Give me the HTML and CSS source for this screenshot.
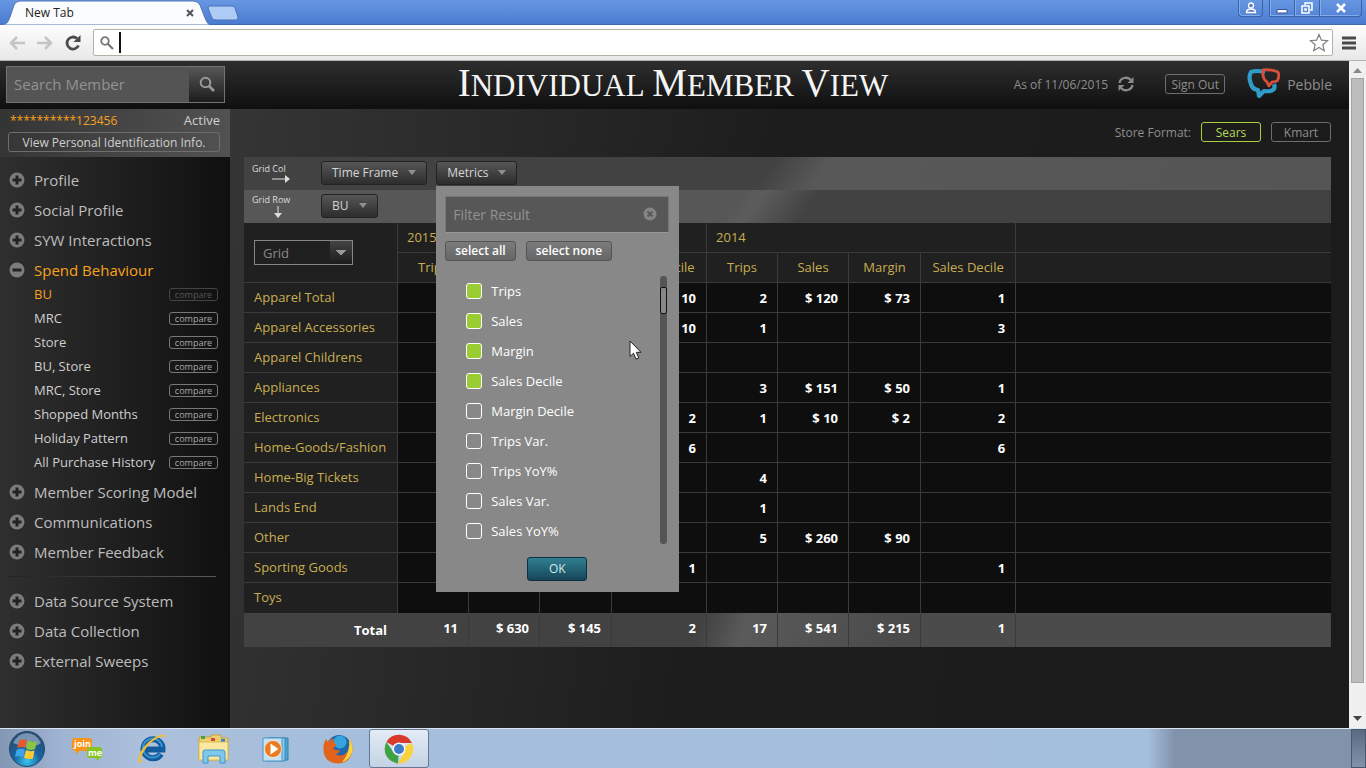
FILE: index.html
```html
<!DOCTYPE html>
<html lang="en">
<head>
  <meta charset="UTF-8">
  <meta name="viewport" content="width=device-width, initial-scale=1.0">
  <title>Individual Member View</title>
  <link rel="stylesheet" href="styles.css">
</head>
<body>

  <!-- icons used more than once -->
  <svg class="sprite" aria-hidden="true">
    <symbol id="plus" viewBox="0 0 16 16">
      <circle cx="8" cy="8" r="7.5" fill="#7c7c7c"/>
      <path d="M8 3.5v9M3.5 8h9" stroke="#222" stroke-width="3"/>
    </symbol>
    <symbol id="minus" viewBox="0 0 16 16">
      <circle cx="8" cy="8" r="7.5" fill="#7c7c7c"/>
      <path d="M3.5 8h9" stroke="#222" stroke-width="3"/>
    </symbol>
  </svg>

  <!-- Browser window -->
  <div class="tabstrip">
    <div class="tab">
      <svg class="tab-shape" viewBox="0 0 210 25" preserveAspectRatio="none" aria-hidden="true">
        <path d="M0 25C7 25 8 22 10 17L14 5Q16 1 20 1H193Q198 1 200 5L205 18Q208 25 210 25Z" fill="#fbfcfe" stroke="#5475b5" stroke-width="1"/>
      </svg>
      <span class="tab-title">New Tab</span>
      <button class="tab-close" aria-label="Close tab">
        <svg width="8" height="8" viewBox="0 0 8 8"><path d="M1 1l6 6M7 1L1 7" stroke="#555" stroke-width="2"/></svg>
      </button>
    </div>
    <button class="tab-new" aria-label="New tab">
      <svg width="32" height="16" viewBox="0 0 32 16"><path d="M3 1H25Q27 1 28 3L31 12Q31 15 29 15H9Q6 15 5 13L1 3Q1 1 3 1Z" fill="#aecbf3" stroke="#4a72bd"/></svg>
    </button>
    <div class="window-buttons">
      <button class="win user" aria-label="User">
        <svg width="12" height="12" viewBox="0 0 12 12"><circle cx="6" cy="3.500" r="2.500" fill="#5d7fc0" stroke="#fff" stroke-width="1.300"/><path d="M1.500 10.500Q1.500 7 6 7T10.500 10.500Z" fill="#5d7fc0" stroke="#fff" stroke-width="1.300"/></svg>
      </button>
      <button class="win" aria-label="Minimize">
        <svg width="12" height="12" viewBox="0 0 12 12"><path d="M1 7.500h10v3.500H1z" fill="#fff" stroke="#345697"/></svg>
      </button>
      <button class="win" aria-label="Restore">
        <svg width="12" height="12" viewBox="0 0 12 12"><path d="M4 3V1h7v7H9M1 4h7v7H1zM4 7h1v1H4z" fill="none" stroke="#fff" stroke-width="1.500"/></svg>
      </button>
      <button class="win close" aria-label="Close window">
        <svg width="12" height="10" viewBox="0 0 12 10"><path d="M2 1l8 8M10 1L2 9" stroke="#fff" stroke-width="2.500"/></svg>
      </button>
    </div>
  </div>

  <div class="toolbar">
    <button class="nav" aria-label="Back">
      <svg width="16" height="14" viewBox="0 0 16 14"><path d="M8 1L2 7l6 6M2 7h14" fill="none" stroke="#c4c4c4" stroke-width="2.500"/></svg>
    </button>
    <button class="nav" aria-label="Forward">
      <svg width="16" height="14" viewBox="0 0 16 14"><path d="M8 1l6 6-6 6M14 7H0" fill="none" stroke="#c4c4c4" stroke-width="2.500"/></svg>
    </button>
    <button class="nav" aria-label="Reload">
      <svg width="16" height="16" viewBox="0 0 16 16"><path d="M13.500 10.500A6 6 0 1 1 12 3.500" fill="none" stroke="#4a4a4a" stroke-width="2.800"/><path d="M15.500 0v7h-7z" fill="#4a4a4a"/></svg>
    </button>
    <div class="omnibox">
      <svg width="14" height="14" viewBox="0 0 14 14" aria-hidden="true"><circle cx="5" cy="5" r="3.800" fill="none" stroke="#777" stroke-width="1.800"/><path d="M8 8l5 5" stroke="#777" stroke-width="2.200"/></svg>
      <span class="caret"></span>
      <input type="text" class="url" aria-label="Address">
      <svg width="20" height="19" viewBox="0 0 20 19" aria-hidden="true"><path d="M10 1.500l2.400 5.700 6.100.5-4.700 4 1.500 6-5.300-3.200-5.300 3.200 1.500-6-4.700-4 6.100-.5z" fill="#fff" stroke="#808080" stroke-width="1.200"/></svg>
    </div>
    <button class="nav" aria-label="Menu">
      <svg width="14" height="14" viewBox="0 0 14 14"><path d="M0 2h14M0 7h14M0 12h14" stroke="#4a4a4a" stroke-width="3"/></svg>
    </button>
  </div>

  <!-- Page -->
  <div class="viewport">
    <div class="app">
      <header class="header">
        <form class="search">
          <input type="text" placeholder="Search Member" aria-label="Search Member">
          <button type="button" aria-label="Search">
            <svg width="16" height="16" viewBox="0 0 16 16"><circle cx="6.500" cy="6.500" r="4.800" fill="none" stroke="#999" stroke-width="2"/><path d="M10 10l5 5" stroke="#999" stroke-width="2.600"/></svg>
          </button>
        </form>
        <h1><span>Individual</span> <span>Member</span> <span>View</span></h1>
        <div class="session">
          <span class="as-of">As of 11/06/2015</span>
          <button class="refresh" aria-label="Refresh">
            <svg width="16" height="16" viewBox="0 0 16 16"><path d="M1.500 7A6.500 6 0 0 1 13 4M14.500 9A6.500 6 0 0 1 3 12" fill="none" stroke="#8a8a8a" stroke-width="2.300"/><path d="M15.500 1v6h-6zM.5 15V9h6z" fill="#8a8a8a"/></svg>
          </button>
          <button class="outline sign-out">Sign Out</button>
          <svg class="logo" width="33" height="32" viewBox="0 0 33 32" aria-hidden="true">
            <path d="M18 4Q9 2 4 4Q1 9 4 16Q5 21 11 22L12 28L17 23Q24 24 27 21Q28 19 27 16" fill="none" stroke="#2f9cc9" stroke-width="4.200" stroke-linejoin="round"/>
            <path d="M16 2Q24 1 31 4Q33 9 30 13Q27 14 25 14L22 18L20 14Q15 11 16 2Z" fill="none" stroke="#d9503a" stroke-width="2.800" stroke-linejoin="round"/>
          </svg>
          <span class="brand">Pebble</span>
        </div>
      </header>

      <div class="body">
        <aside class="sidebar">
          <div class="member">
            <div class="member-row">
              <span class="member-id">**********123456</span>
              <span>Active</span>
            </div>
            <button class="outline">View Personal Identification Info.</button>
          </div>
          <nav>
            <ul class="menu">
              <li><a href="#"><svg><use href="#plus"/></svg>Profile</a></li>
              <li><a href="#"><svg><use href="#plus"/></svg>Social Profile</a></li>
              <li><a href="#"><svg><use href="#plus"/></svg>SYW Interactions</a></li>
              <li>
                <a href="#" class="active"><svg><use href="#minus"/></svg>Spend Behaviour</a>
                <ul class="submenu">
                  <li><a href="#" class="active">BU</a><button disabled>compare</button></li>
                  <li><a href="#">MRC</a><button>compare</button></li>
                  <li><a href="#">Store</a><button>compare</button></li>
                  <li><a href="#">BU, Store</a><button>compare</button></li>
                  <li><a href="#">MRC, Store</a><button>compare</button></li>
                  <li><a href="#">Shopped Months</a><button>compare</button></li>
                  <li><a href="#">Holiday Pattern</a><button>compare</button></li>
                  <li><a href="#">All Purchase History</a><button>compare</button></li>
                </ul>
              </li>
              <li><a href="#"><svg><use href="#plus"/></svg>Member Scoring Model</a></li>
              <li><a href="#"><svg><use href="#plus"/></svg>Communications</a></li>
              <li><a href="#"><svg><use href="#plus"/></svg>Member Feedback</a></li>
            </ul>
            <hr>
            <ul class="menu">
              <li><a href="#"><svg><use href="#plus"/></svg>Data Source System</a></li>
              <li><a href="#"><svg><use href="#plus"/></svg>Data Collection</a></li>
              <li><a href="#"><svg><use href="#plus"/></svg>External Sweeps</a></li>
            </ul>
          </nav>
        </aside>

        <main class="main">
          <div class="store-format">
            <span>Store Format:</span>
            <button class="outline selected">Sears</button>
            <button class="outline">Kmart</button>
          </div>

          <div class="panel">
            <div class="bar bar-col">
              <div class="axis">
                <span>Grid Col</span>
                <svg class="arrow-right" width="20" height="8" viewBox="0 0 20 8" aria-hidden="true"><path d="M1 4h15" stroke="#ddd"/><path d="M14 0l5 4-5 4z" fill="#ddd"/></svg>
              </div>
              <button class="drop">Time Frame <i></i></button>
              <div class="drop-wrap">
                <button class="drop">Metrics <i></i></button>

                <div class="popup">
                  <div class="filter">
                    <input type="text" placeholder="Filter Result" aria-label="Filter Result">
                    <button aria-label="Clear filter">
                      <svg width="14" height="14" viewBox="0 0 14 14"><circle cx="7" cy="7" r="6.500" fill="#858585"/><path d="M4.500 4.500l5 5M9.500 4.500l-5 5" stroke="#5a5a5a" stroke-width="2"/></svg>
                    </button>
                  </div>
                  <div class="select-buttons">
                    <button>select all</button>
                    <button>select none</button>
                  </div>
                  <div class="list">
                    <div class="options">
                      <label><input type="checkbox" checked>Trips</label>
                      <label><input type="checkbox" checked>Sales</label>
                      <label><input type="checkbox" checked>Margin</label>
                      <label><input type="checkbox" checked>Sales Decile</label>
                      <label><input type="checkbox">Margin Decile</label>
                      <label><input type="checkbox">Trips Var.</label>
                      <label><input type="checkbox">Trips YoY%</label>
                      <label><input type="checkbox">Sales Var.</label>
                      <label><input type="checkbox">Sales YoY%</label>
                    </div>
                    <div class="list-scroll"><div></div></div>
                  </div>
                  <button class="ok">OK</button>
                  <svg class="pointer" width="14" height="21" viewBox="0 0 14 21" aria-hidden="true"><path d="M1 1v15.500l3.500-3.300 2.500 6 2.800-1.200-2.500-5.700H12z" fill="#fff" stroke="#222"/></svg>
                </div>
              </div>
            </div>
            <div class="bar bar-row">
              <div class="axis">
                <span>Grid Row</span>
                <svg class="arrow-down" width="8" height="12" viewBox="0 0 8 12" aria-hidden="true"><path d="M4 0v9" stroke="#ddd"/><path d="M0 7h8l-4 5z" fill="#ddd"/></svg>
              </div>
              <button class="drop">BU <i></i></button>
            </div>

            <table class="grid">
              <colgroup>
                <col class="c-name">
                <col class="c-num"><col class="c-num"><col class="c-margin"><col class="c-decile">
                <col class="c-num"><col class="c-num"><col class="c-margin"><col class="c-decile">
                <col>
              </colgroup>
              <thead>
                <tr>
                  <th rowspan="2" class="view">
                    <select aria-label="View"><option>Grid</option></select>
                  </th>
                  <th colspan="4" class="year">2015</th>
                  <th colspan="4" class="year">2014</th>
                  <th></th>
                </tr>
                <tr>
                  <th>Trips</th><th>Sales</th><th>Margin</th><th>Sales Decile</th>
                  <th>Trips</th><th>Sales</th><th>Margin</th><th>Sales Decile</th>
                  <th></th>
                </tr>
              </thead>
              <tbody>
                <tr><th>Apparel Total</th><td></td><td></td><td></td><td>10</td><td>2</td><td>$ 120</td><td>$ 73</td><td>1</td><td></td></tr>
                <tr><th>Apparel Accessories</th><td></td><td></td><td></td><td>10</td><td>1</td><td></td><td></td><td>3</td><td></td></tr>
                <tr><th>Apparel Childrens</th><td></td><td></td><td></td><td></td><td></td><td></td><td></td><td></td><td></td></tr>
                <tr><th>Appliances</th><td></td><td></td><td></td><td></td><td>3</td><td>$ 151</td><td>$ 50</td><td>1</td><td></td></tr>
                <tr><th>Electronics</th><td></td><td></td><td></td><td>2</td><td>1</td><td>$ 10</td><td>$ 2</td><td>2</td><td></td></tr>
                <tr><th>Home-Goods/Fashion</th><td></td><td></td><td></td><td>6</td><td></td><td></td><td></td><td>6</td><td></td></tr>
                <tr><th>Home-Big Tickets</th><td></td><td></td><td></td><td></td><td>4</td><td></td><td></td><td></td><td></td></tr>
                <tr><th>Lands End</th><td></td><td></td><td></td><td></td><td>1</td><td></td><td></td><td></td><td></td></tr>
                <tr><th>Other</th><td></td><td></td><td></td><td></td><td>5</td><td>$ 260</td><td>$ 90</td><td></td><td></td></tr>
                <tr><th>Sporting Goods</th><td></td><td></td><td></td><td>1</td><td></td><td></td><td></td><td>1</td><td></td></tr>
                <tr><th>Toys</th><td></td><td></td><td></td><td></td><td></td><td></td><td></td><td></td><td></td></tr>
              </tbody>
              <tfoot>
                <tr><th>Total</th><td>11</td><td>$ 630</td><td>$ 145</td><td>2</td><td>17</td><td>$ 541</td><td>$ 215</td><td>1</td><td></td></tr>
              </tfoot>
            </table>
          </div>
        </main>
      </div>
    </div>

    <div class="scrollbar">
      <svg width="9" height="5" viewBox="0 0 9 5"><path d="M0 5l4.500-5L9 5z" fill="#888"/></svg>
      <div class="thumb"></div>
      <svg width="9" height="5" viewBox="0 0 9 5"><path d="M0 0h9L4.500 5z" fill="#444"/></svg>
    </div>
  </div>

  <!-- Taskbar -->
  <div class="taskbar">
    <button aria-label="Start">
      <svg width="38" height="38" viewBox="0 0 38 38">
        <defs>
          <radialGradient id="orb" cx="50%" cy="85%" r="75%"><stop offset="0" stop-color="#38c4ee"/><stop offset=".5" stop-color="#17639f"/><stop offset="1" stop-color="#2b4c72"/></radialGradient>
        </defs>
        <circle cx="19" cy="19" r="17.500" fill="url(#orb)" stroke="#234a6d"/>
        <path d="M5 13Q10 3 19 3T33 13Q26 18 19 17T5 13Z" fill="#a9c3da" opacity=".6"/>
        <path d="M11 11Q15 8 19 10L17 18Q13 16 9 18.500Z" fill="#e8582a"/>
        <path d="M20 10.500Q24 13 29 11L27 19Q22 21 18 18.500Z" fill="#8cc43c"/>
        <path d="M8.500 20Q13 17.500 16.800 19.500L15 27Q11 25 7 27Z" fill="#3fa4e8"/>
        <path d="M18 20Q22 22 26.500 20.500L25 28.500Q20 30 16 27.500Z" fill="#fbc934"/>
      </svg>
    </button>
    <button aria-label="join.me">
      <svg width="34" height="26" viewBox="0 0 34 26">
        <path d="M4 2H18Q21 2 21 5V12Q21 15 18 15H9L5 18V15Q1 15 1 12V5Q1 2 4 2Z" fill="#f7941e"/>
        <path d="M18 11H28Q31 11 31 14V19Q31 22 28 22V25L24 22H18Q16 22 16 19V14Q16 11 18 11Z" fill="#86c520"/>
        <text x="3" y="11" class="join-text">join</text><text x="17" y="20" class="join-text">me</text>
      </svg>
    </button>
    <button aria-label="Internet Explorer">
      <svg width="34" height="34" viewBox="0 0 34 34">
        <path d="M26 22A9.500 9.500 0 1 1 27.500 17.500H11" fill="none" stroke="#125b9e" stroke-width="6"/>
        <path d="M25 22A9.500 9.500 0 1 1 27 15" fill="none" stroke="#3796d2" stroke-width="2"/>
        <path d="M32 5Q29 0 19 6Q6 14 3 27Q2 33 8 29Q3 30 8 21Q13 11 23 6Q29 3 32 5Z" fill="#f2bf3a"/>
      </svg>
    </button>
    <button aria-label="Explorer">
      <svg width="34" height="32" viewBox="0 0 34 32">
        <path d="M2 4H14V2H24V5H31V27H2Z" fill="#eecf6d" stroke="#c6a23c"/>
        <path d="M4 3h4v3H4z" fill="#4aa04a"/><path d="M14 5h4v3h-4z" fill="#d24a36"/><path d="M24 6h4v3h-4z" fill="#3b83c4"/>
        <path d="M2 9H31V27H2Z" fill="#fae8a0" stroke="#d9b95a"/>
        <path d="M6 30V19Q6 17 8 17H25Q28 17 28 19V30H23V23H11V30Z" fill="#7fc8ec" stroke="#4096c8"/>
      </svg>
    </button>
    <button aria-label="Media Player">
      <svg width="30" height="28" viewBox="0 0 30 28">
        <path d="M8 3H27V25H8Z" fill="#4fa3d0" stroke="#3380ae"/><path d="M5 3H24V26H5Z" fill="#8cc9ea" stroke="#3a8abb"/><path d="M2 3H21V26H2Z" fill="#c4e0f1" stroke="#4c99c5"/>
        <circle cx="12" cy="14" r="8.500" fill="#ee7a1e" stroke="#fff" stroke-opacity=".6"/><path d="M9.500 8.500v11l8-5.500z" fill="#fff"/>
      </svg>
    </button>
    <button aria-label="Firefox">
      <svg width="32" height="32" viewBox="0 0 32 32">
        <circle cx="17" cy="14" r="12" fill="#1c67ae"/><circle cx="18" cy="9" r="6.500" fill="#35a6dd"/>
        <path d="M27 5Q31 11 30.500 18Q28 30 16 30.500Q3 30 1.500 18Q1 10 4 6L6 9Q9 5 12 6Q10 9 14 11Q15 13 11 15Q13 18 18 17Q17 21 13 21Q20 25 25 19Q29 13 27 5Z" fill="#e2631b"/>
        <path d="M27 5Q31 11 30.500 18Q28 27 20 29Q29 19 27 5Z" fill="#fbd33c"/>
      </svg>
    </button>
    <button class="current" aria-label="Chrome">
      <svg width="30" height="30" viewBox="0 0 30 30">
        <path d="M15 15L2.400 8A14.500 14.500 0 0 1 28 9H15Z" fill="#d93a2b"/>
        <path d="M15 15L28 9A14.500 14.500 0 0 1 14 29.400L20.500 18Z" fill="#fbd23c"/>
        <path d="M15 15L14 29.400A14.500 14.500 0 0 1 2.400 8L9.500 18Z" fill="#3fa246"/>
        <circle cx="15" cy="15" r="6.600" fill="#f5f5f5"/><circle cx="15" cy="15" r="5" fill="#3a7cc9"/>
      </svg>
    </button>
    <button class="show-desktop" aria-label="Show desktop"></button>
  </div>

</body>
</html>
```
FILE: styles.css
```css
* {
  box-sizing: border-box;
}

body {
  margin: 0;
  height: 100vh;
  display: flex;
  flex-direction: column;
  overflow: hidden;
  background: #1b1b1b;
  font-family: "Trebuchet MS", "Open Sans", sans-serif;
  font-size: 13px;
  color: #bdbdbd;
}

button, input, select {
  font: inherit;
  color: inherit;
  margin: 0;
  padding: 0;
  border: 0;
  border-radius: 0;
  background: none;
  outline: none;
}

button {
  display: flex;
  align-items: center;
  justify-content: center;
  white-space: nowrap;
}

ul {
  list-style: none;
  margin: 0;
  padding: 0;
}

a {
  color: inherit;
  text-decoration: none;
}

svg {
  flex: none;
}

.sprite {
  display: none;
}

/* Browser */
.tabstrip {
  flex: none;
  display: flex;
  height: 25px;
  background: linear-gradient(#6797e2, #4a7bd0);
  border-bottom: 1px solid #4468ac;
}

.tab {
  display: grid;
  grid-template-columns: 25px 1fr 24px;
  align-items: center;
  width: 210px;
  height: 25px;
}

.tab-shape {
  grid-area: 1 / 1 / 2 / 4;
  width: 100%;
  height: 25px;
}

.tab-title {
  grid-area: 1 / 2;
  font-size: 12px;
  color: #222;
}

.tab-close {
  grid-area: 1 / 3;
  justify-content: flex-start;
}

.tab-new {
  height: 26px;
  margin-left: -3px;
}

.window-buttons {
  display: flex;
  margin-left: auto;
  padding-right: 4px;
}

.win {
  width: 25px;
  height: 17px;
  border: 1px solid #3c62a8;
  border-top: 0;
  border-right: 0;
  box-shadow: inset 1px -1px #83abea;
}

.win.user {
  border-right: 1px solid #3c62a8;
  border-radius: 0 0 4px 4px;
  margin-right: 6px;
}

.win.close {
  width: 43px;
  border-right: 1px solid #3c62a8;
  border-radius: 0 0 4px 0;
}

.toolbar {
  flex: none;
  display: flex;
  align-items: center;
  gap: 12px;
  height: 36px;
  padding: 0 9px 0 9px;
  background: linear-gradient(#fdfdfd, #e8e8e8);
  border-bottom: 1px solid #b4b4b4;
}

.nav {
  width: 16px;
  height: 20px;
}

.omnibox {
  flex: 1;
  display: flex;
  align-items: center;
  height: 27px;
  padding: 0 3px 0 6px;
  margin-right: -4px;
  background: #fff;
  border: 1px solid #b6b1a6;
  border-radius: 2px;
}

.caret {
  width: 2px;
  height: 21px;
  margin-left: 5px;
  background: #111;
}

.url {
  flex: 1;
  color: #222;
}

/* Page */
.viewport {
  flex: 1;
  display: flex;
  min-height: 0;
}

.app {
  flex: 1;
  display: flex;
  flex-direction: column;
}

.header {
  display: grid;
  grid-template-columns: 1fr auto 1fr;
  align-items: center;
  height: 48px;
  padding: 0 17px 2px 6px;
  background: linear-gradient(#2e2e2e, #0f0f0f);
}

.search {
  display: flex;
  width: 219px;
  height: 37px;
  border: 1px solid #737373;
}

.search input {
  flex: 1;
  min-width: 0;
  padding-left: 7px;
  font-size: 15px;
  background: #545454;
}

.search input::placeholder,
.filter input::placeholder {
  color: #929292;
  opacity: 1;
}

.search button {
  width: 35px;
  background: linear-gradient(#575757, #1c1c1c);
}

h1 {
  margin: 0 0 0 8px;
  font-family: "Liberation Serif", serif;
  font-size: 31px;
  font-weight: normal;
  line-height: 40px;
  text-transform: uppercase;
  color: #f4f4f4;
}

h1 span {
  display: inline-block;
}

h1 span::first-letter {
  font-size: 39px;
}

.session {
  display: flex;
  align-items: center;
  justify-content: flex-end;
  color: #8e8e8e;
}

.as-of {
  font-size: 12px;
}

.refresh {
  margin: 0 31px 0 10px;
}

.outline {
  height: 20px;
  border: 1px solid #6e6e6e;
  border-radius: 3px;
  font-size: 12px;
}

.sign-out {
  width: 60px;
}

.logo {
  margin: 0 7px 0 22px;
}

.brand {
  font-size: 14px;
}

.body {
  flex: 1;
  display: flex;
}

.sidebar {
  flex: none;
  width: 230px;
  background: linear-gradient(to right, #2f2f2f, #101010);
}

.member {
  height: 48px;
  padding: 2px 10px 0 8px;
  background: linear-gradient(100deg, #343434, #474747 60%, #525252);
}

.member-row {
  display: flex;
  justify-content: space-between;
  padding-left: 2px;
  line-height: 19px;
  color: #cfcfcf;
}

.member-id {
  font-size: 12px;
  font-weight: 500;
  color: #f7a11c;
}

.member .outline {
  width: 100%;
  margin-top: 2px;
  color: #d0d0d0;
}

.sidebar nav {
  padding: 8px 14px 0 9px;
}

.menu > li > a {
  display: flex;
  align-items: center;
  gap: 9px;
  height: 30px;
  font-size: 15px;
}

.menu > li > a svg {
  width: 16px;
  height: 16px;
}

.menu .active {
  color: #f7a11c;
}

.submenu {
  padding: 0 0 3px 25px;
  margin: -3px -2px 0 0;
}

.submenu li {
  display: flex;
  align-items: center;
  justify-content: space-between;
  height: 24px;
  font-weight: 500;
  color: #cfcfcf;
  white-space: nowrap;
}

.submenu button {
  width: 49px;
  height: 13px;
  border: 1px solid #777;
  border-radius: 3px;
  font-size: 9px;
  line-height: 9px;
  color: #aaa;
}

.submenu button:disabled {
  border-color: #444;
  color: #555;
}

.sidebar hr {
  height: 1px;
  margin: 9px 0;
  border: 0;
  background: linear-gradient(to right, #222, #5a5a5a);
}

.main {
  flex: 1;
  min-width: 0;
  padding: 13px 18px 0 14px;
  background: linear-gradient(100deg, #353535, #1d1d1d 45%, #1b1b1b);
}

.store-format {
  display: flex;
  align-items: center;
  justify-content: flex-end;
  gap: 10px;
  height: 20px;
  margin-bottom: 15px;
  font-size: 12px;
  color: #8e8e8e;
}

.store-format .outline {
  width: 60px;
}

.store-format .selected {
  border-color: #a6d13c;
  color: #b4da58;
}

/* Grid settings */
.bar {
  display: flex;
  align-items: center;
  height: 33px;
  padding: 0 0 2px 8px;
}

.bar-col {
  background: linear-gradient(125deg, #424242 48%, #585858 53%, #555);
}

.bar-row {
  background: linear-gradient(125deg, #575757 45%, #5c5c5c 47%, #424242 52%);
}

.axis {
  display: flex;
  flex-direction: column;
  width: 69px;
  font-size: 9px;
  line-height: 12px;
  color: #ddd;
}

.arrow-right {
  margin-left: 19px;
}

.arrow-down {
  margin-left: 22px;
}

.drop {
  height: 24px;
  gap: 10px;
  padding: 0 10px;
  border: 1px solid #222;
  border-radius: 3px;
  background: linear-gradient(#565656, #2d2d2d);
  font-size: 12px;
  font-weight: 500;
  color: #d5d5d5;
}

.drop i {
  border: 4px solid transparent;
  border-top: 5px solid #909090;
  border-bottom: 0;
}

.drop-wrap {
  position: relative;
  margin-left: 9px;
}

.popup {
  position: absolute;
  z-index: 2;
  top: 25px;
  left: 0;
  width: 243px;
  padding: 10px 10px 11px 9px;
  background: #888;
  color: #fff;
}

.filter {
  display: flex;
  height: 37px;
  padding: 0 11px 0 7px;
  border: 1px solid #777;
  border-bottom-color: #999;
  background: #575757;
}

.filter input {
  flex: 1;
  min-width: 0;
  font-size: 14px;
}

.select-buttons {
  display: flex;
  gap: 10px;
  margin: 8px 0 15px;
}

.select-buttons button {
  height: 20px;
  padding: 0 9px;
  border: 1px solid #555;
  border-radius: 3px;
  background: linear-gradient(#7b7b7b, #666);
  font-size: 12px;
  font-weight: 600;
}

.list {
  display: flex;
  justify-content: space-between;
  height: 270px;
  padding-right: 2px;
}

.options {
  padding-left: 21px;
}

.options label {
  display: flex;
  align-items: center;
  gap: 9px;
  height: 30px;
  font-weight: 500;
}

.options input {
  appearance: none;
  width: 16px;
  height: 16px;
  border: 1px solid #fff;
  border-radius: 3px;
}

.options input:checked {
  background: #9acd32;
}

.list-scroll {
  width: 7px;
  height: 268px;
  padding-top: 11px;
  border-radius: 3px;
  background: #555;
}

.list-scroll div {
  height: 27px;
  border: 1px solid #111;
  border-radius: 2px;
  background: #888;
}

.ok {
  width: 60px;
  height: 24px;
  margin: 11px auto 0;
  border: 1px solid #0d2f40;
  border-radius: 3px;
  background: linear-gradient(#317f92, #164658);
  font-size: 12px;
  color: #d5e6ea;
}

.pointer {
  position: absolute;
  top: 154px;
  left: 193px;
}

/* Data grid */
.grid {
  width: 100%;
  table-layout: fixed;
  border-spacing: 0;
  background: #0e0e0e;
}

.c-name { width: 154px; }
.c-num { width: 71px; }
.c-margin { width: 72px; }
.c-decile { width: 95px; }

.grid th,
.grid td {
  height: 30px;
  padding: 0 10px;
  border-right: 1px solid #3a3a3a;
  border-bottom: 1px solid #3a3a3a;
  line-height: 18px;
  white-space: nowrap;
}

.grid th {
  padding-bottom: 2px;
  background: #202020;
  font-weight: 500;
  color: #c8ae50;
}

.grid thead th {
  padding: 0 0 2px;
}

.grid thead .year {
  padding: 0 9px 2px;
  text-align: left;
}

.grid thead .view {
  padding: 0 10px;
  text-align: left;
}

.grid select {
  appearance: none;
  width: 99px;
  height: 25px;
  padding-left: 8px;
  border: 1px solid #858585;
  background:
    conic-gradient(from -45deg at 50% 100%, #999 90deg, transparent 0) right 6px center / 10px 5px no-repeat,
    linear-gradient(#444, #1c1c1c) right / 22px 100% no-repeat;
  color: #888;
}

.grid tbody th {
  text-align: left;
}

.grid td {
  font-weight: bold;
  text-align: right;
  color: #fff;
}

.grid th:last-child,
.grid td:last-child {
  border-right: 0;
}

.grid tbody tr:last-child > * {
  border-bottom: 0;
}

.grid tfoot tr {
  background: linear-gradient(110deg, #424242 42%, #5a5a5a 46%, #4b4b4b 60%);
}

.grid tfoot th,
.grid tfoot td {
  height: 34px;
  padding-bottom: 4px;
  border-bottom: 0;
  background: none;
  font-weight: bold;
  text-align: right;
  color: #fff;
}

.grid tfoot th {
  padding-bottom: 0;
  border-right-color: transparent;
}

/* Page scrollbar */
.scrollbar {
  flex: none;
  display: flex;
  flex-direction: column;
  align-items: center;
  width: 17px;
  padding: 7px 0;
  background: #f0f0f0;
}

.thumb {
  flex: 1;
  width: 13px;
  margin: 5px 0 33px;
  border: 1px solid #a4a4a4;
  background: #bcbcbc;
}

/* Taskbar */
.taskbar {
  flex: none;
  display: flex;
  align-items: center;
  height: 40px;
  border-top: 1px solid #dbe5f2;
  background: linear-gradient(to right, #8397b4, #9fb3d2 60px, #adc0dc 150px, #a4bedb 300px, #a4bfdd 84%, #8193ab 86%);
}

.taskbar button {
  width: 62px;
  height: 39px;
}

.taskbar button:first-child {
  width: 54px;
}

.taskbar button:nth-child(2) {
  width: 67px;
}

.taskbar .current {
  width: 60px;
  border: 1px solid #66788f;
  border-radius: 3px;
  background: linear-gradient(#e4ecf6, #c3d2e5);
}

.taskbar .show-desktop {
  width: 15px;
  margin-left: auto;
  border: 1px solid #48586e;
  background: linear-gradient(#5a6b80, #8193ab);
}

.join-text {
  font-size: 9px;
  font-weight: bold;
  fill: #fff;
}
```
